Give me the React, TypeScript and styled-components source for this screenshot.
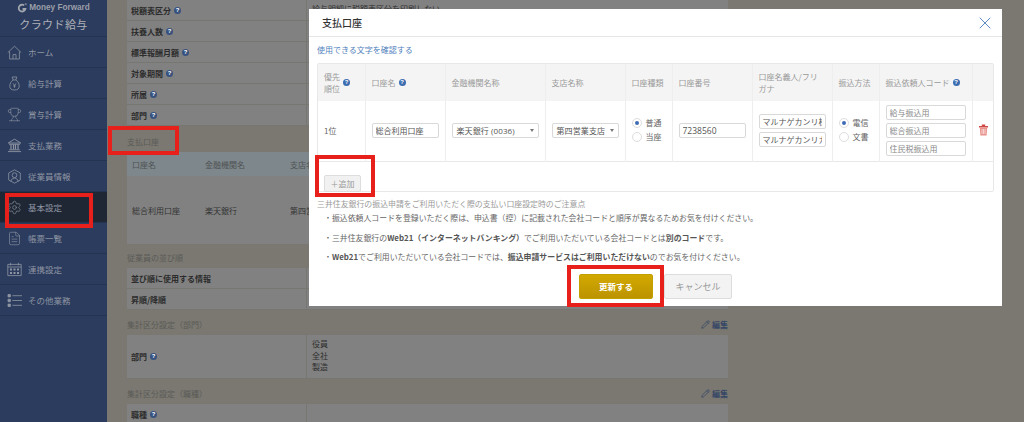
import * as React from "react";
import styled, { createGlobalStyle } from "styled-components";
import { FileText, Pencil, Settings, Trophy, X } from "lucide-react";

const GlobalStyle = createGlobalStyle`
  html, body {
    margin: 0;
    padding: 0;
    background: #7a7871;
  }
  * {
    box-sizing: border-box;
  }
  body {
    font-family: "Noto Sans CJK JP", "Liberation Sans", sans-serif;
  }
`;

const Page = styled.div`
  position: relative;
  display: flex;
  width: 1024px;
  height: 422px;
  overflow: hidden;
  background: #7a7871;
`;

const Sidebar = styled.nav`
  flex: 0 0 107px;
  background: #2b3c5e;
  color: #8f95a2;
`;

const Logo = styled.div`
  height: 37px;
  padding-top: 2px;
  text-align: center;
  border-bottom: 1px solid #24334f;
`;

const LogoTop = styled.div`
  display: flex;
  align-items: center;
  justify-content: center;
  gap: 2px;
  font-family: "Liberation Sans", sans-serif;
  font-size: 8.2px;
  font-weight: 700;
  line-height: 12px;
  color: #9a9fa9;
`;

const LogoName = styled.div`
  margin-top: 3px;
  font-size: 11px;
  line-height: 15px;
  letter-spacing: 0.4px;
  color: #aeb1b8;
`;

const NavItem = styled.div<{ $active?: boolean }>`
  display: flex;
  align-items: center;
  gap: 6px;
  height: 31px;
  padding-left: 7px;
  font-size: 8.5px;
  border-bottom: 1px solid #24334f;
  background: ${(p) => (p.$active ? "#1f2735" : "transparent")};
  svg {
    flex: 0 0 15px;
  }
`;

const Main = styled.main`
  flex: 0 0 621px;
  padding-left: 20px;
`;

const Panel = styled.div`
  background: #818181;
  border-radius: 1px;
`;

const SettingRow = styled.div<{ $height?: number }>`
  display: grid;
  grid-template-columns: 180px 1fr;
  height: ${(p) => p.$height ?? 21}px;
  border-bottom: 1px solid #777772;
`;

const SettingLabel = styled.div`
  display: flex;
  align-items: center;
  gap: 3px;
  padding-left: 4px;
  font-size: 8px;
  font-weight: 700;
  color: #2c2c2c;
  border-right: 1px solid #777772;
`;

const SettingValue = styled.div`
  padding: 3px 5px;
  font-size: 8px;
  line-height: 11.5px;
  color: #2f2f2f;
`;

const SectionTitle = styled.div<{ $top: number }>`
  display: flex;
  align-items: flex-end;
  justify-content: space-between;
  height: 11px;
  margin: ${(p) => p.$top}px 0 5px;
  font-size: 8px;
  line-height: 11px;
  color: #5a5a56;
`;

const EditLink = styled.span`
  display: flex;
  align-items: center;
  gap: 2px;
  font-weight: 700;
  color: #364766;
`;

const BankHead = styled.div`
  display: grid;
  grid-template-columns: 73px 85px 1fr;
  height: 24px;
  padding-left: 5px;
  align-items: center;
  background: #7e878b;
  font-size: 8px;
  color: #4f5355;
`;

const BankBody = styled(BankHead)`
  height: 68px;
  background: #818181;
  color: #333;
`;

const Overlay = styled.section`
  position: absolute;
  left: 309px;
  top: 9px;
  width: 693px;
  height: 297px;
  padding: 0 8px;
  background: #fff;
`;

const ModalHeader = styled.header`
  display: flex;
  align-items: center;
  justify-content: space-between;
  height: 28px;
  margin: 0 -8px;
  padding: 0 7px 0 13px;
  border-bottom: 1px solid #e6e6e6;
  font-size: 10px;
  font-weight: 500;
  color: #333;
  svg {
    color: #5d8cc6;
  }
`;

const CharLink = styled.div`
  height: 26px;
  padding-top: 7px;
  font-size: 8px;
  line-height: 11px;
  color: #4f81bd;
`;

const Accounts = styled.div`
  width: 677px;
  border: 1px solid #e8e8e8;
  border-radius: 2px;
`;

const AccountTable = styled.table`
  width: 100%;
  table-layout: fixed;
  border-collapse: collapse;
  font-size: 8px;
  th, td {
    padding: 0;
    border-right: 1px solid #eee;
  }
  th:last-child, td:last-child {
    border-right: 0;
  }
  tbody tr {
    border-bottom: 1px solid #e8e8e8;
  }
`;

const HeadCell = styled.th<{ $center?: boolean }>`
  height: 37px;
  padding: 0 6px !important;
  background: #f4f4f4;
  font-weight: 400;
  line-height: 12px;
  text-align: ${(p) => (p.$center ? "center" : "left")};
  color: #9a9a9a;
`;

const HeadInner = styled.span`
  display: inline-flex;
  align-items: center;
  gap: 3px;
`;

const BodyCell = styled.td<{ $pad?: number }>`
  height: 60px;
  padding: 0 ${(p) => p.$pad ?? 6}px !important;
  color: #666;
`;

const FieldStack = styled.div`
  display: flex;
  flex-direction: column;
  gap: 3px;
`;

const TextField = styled.input<{ $numeric?: boolean }>`
  display: block;
  width: 100%;
  height: 15px;
  padding: 0 3px;
  border: 1px solid #d9d9d9;
  border-radius: 2px;
  background: #fff;
  font: 400 ${(p) => (p.$numeric ? "8.5px" : "8px")} "Open Sans", "Noto Sans CJK JP", sans-serif;
  color: #555;
  &::placeholder {
    color: #8a8a8a;
    opacity: 1;
  }
`;

const SelectBox = styled.div`
  display: flex;
  align-items: center;
  justify-content: space-between;
  height: 15px;
  padding: 0 4px;
  border: 1px solid #d9d9d9;
  border-radius: 2px;
  font-family: "Open Sans", "Noto Sans CJK JP", sans-serif;
  font-size: 8px;
  letter-spacing: 0.1px;
  color: #555;
  white-space: nowrap;
  &::after {
    content: "";
    border: 2px solid transparent;
    border-top: 3px solid #777;
    border-bottom: 0;
  }
`;

const RadioLine = styled.label`
  display: flex;
  align-items: center;
  gap: 4px;
  height: 14px;
  font-size: 8px;
  color: #666;
`;

const RadioDot = styled.span<{ $on?: boolean }>`
  position: relative;
  width: 10px;
  height: 10px;
  border: 1px solid #ddd;
  border-radius: 50%;
  &::after {
    content: "";
    display: ${(p) => (p.$on ? "block" : "none")};
    position: absolute;
    inset: 2px;
    border-radius: 50%;
    background: #3f6cb5;
  }
`;

const RadioGroup = styled.div`
  margin-top: -2px;
`;

const AddRow = styled.div`
  height: 29px;
  padding: 6px 6px 0;
`;

const AddButton = styled.button`
  width: 37px;
  height: 17px;
  padding: 0;
  border: 1px solid #ddd;
  border-radius: 2px;
  background: #f1f1f1;
  font: 400 8px "Noto Sans CJK JP", sans-serif;
  color: #999;
`;

const Notice = styled.div`
  margin-top: 6px;
  font-size: 7.9px;
  color: #666;
`;

const NoticeTitle = styled.div`
  line-height: 11px;
  color: #9a9a9a;
`;

const NoticeLine = styled.p`
  margin: 7.5px 0 0;
  padding-left: 7px;
  line-height: 12px;
  white-space: nowrap;
  &:first-of-type {
    margin-top: 3.5px;
  }
  b {
    color: #555;
  }
`;

const ModalActions = styled.div`
  display: flex;
  justify-content: center;
  gap: 11px;
  margin-top: 10.5px;
`;

const PrimaryButton = styled.button`
  width: 74px;
  height: 25px;
  border: 1px solid #c2a000;
  border-radius: 2px;
  background: linear-gradient(#d2a900, #bc9300);
  font: 700 8.5px "Noto Sans CJK JP", sans-serif;
  color: #fff;
`;

const CancelButton = styled.button`
  width: 68px;
  height: 25px;
  border: 1px solid #ddd;
  border-radius: 2px;
  background: #f3f3f3;
  font: 400 9px "Noto Sans CJK JP", sans-serif;
  color: #999;
`;

const Callout = styled.div<{ $x: number; $y: number; $w: number; $h: number }>`
  position: absolute;
  left: ${(p) => p.$x}px;
  top: ${(p) => p.$y}px;
  width: ${(p) => p.$w}px;
  height: ${(p) => p.$h}px;
  border: 4px solid #e8201c;
`;

const HelpDot = styled.span<{ $dim?: boolean }>`
  display: inline-flex;
  align-items: center;
  justify-content: center;
  flex: 0 0 7px;
  width: 7px;
  height: 7px;
  border-radius: 50%;
  background: ${(p) => (p.$dim ? "#38527f" : "#3b6cb0")};
  font: 700 6px/7px "Liberation Sans", sans-serif;
  color: #fff;
`;

const Help = ({ dim }: { dim?: boolean }) => <HelpDot $dim={dim}>?</HelpDot>;

const HomeIcon = () => (
  <svg width="15" height="15" viewBox="0 0 15 15" fill="none" stroke="currentColor" strokeWidth="0.8">
    <path d="M0.8 7.6 7.5 1.2l6.7 6.4M2.6 6.4V14h9.8V6.4M6 14V9.6h3V14" />
  </svg>
);

const BagIcon = () => (
  <svg width="15" height="15" viewBox="0 0 15 15" fill="none" stroke="currentColor" strokeWidth="0.8">
    <path d="M5.2 1h4.6L8.8 4H6.2zM6.2 4C3.6 5.6 2.8 8 2.8 10.2c0 2.6 1.6 3.8 4.7 3.8s4.7-1.2 4.7-3.8C12.2 8 11.4 5.6 8.8 4" />
    <path d="M6 7.4l1.5 2 1.5-2M7.5 9.4v2.4M6.2 10h2.6" />
  </svg>
);

const BankIcon = () => (
  <svg width="15" height="15" viewBox="0 0 15 15" fill="none" stroke="currentColor" strokeWidth="0.9">
    <path d="M1.2 5 7.5 1.2 13.8 5zM2 6.3h11" />
    <path d="M4 6.5v5M6.5 6.5v5M8.5 6.5v5M11 6.5v5" strokeWidth="1.2" />
    <path d="M2.2 11.8h10.6M1 13.6h13" />
  </svg>
);

const StaffIcon = () => (
  <svg width="15" height="15" viewBox="0 0 15 15" fill="none" stroke="currentColor" strokeWidth="0.8">
    <path d="M7.5 0.8 13.3 4v7l-5.8 3.2L1.7 11V4z" />
    <circle cx="7.5" cy="6.2" r="2.4" />
    <path d="M3.8 12.4c.4-2.2 1.8-3.2 3.7-3.2s3.3 1 3.7 3.2" />
  </svg>
);

const CalendarIcon = () => (
  <svg width="15" height="15" viewBox="0 0 15 15" fill="none" stroke="currentColor" strokeWidth="0.8">
    <path d="M0.8 2.4h13.4v11.2H0.8zM3.6 0.8v2.6M11.4 0.8v2.6M0.8 5h13.4" />
    <path d="M3 6.6h2v2H3zM6.5 6.6h2v2h-2zM10 6.6h2v2h-2zM3 10h2v2H3zM6.5 10h2v2h-2zM10 10h2v2h-2z" fill="currentColor" stroke="none" />
  </svg>
);

const ListIcon = () => (
  <svg width="15" height="15" viewBox="0 0 15 15" fill="currentColor" stroke="currentColor" strokeWidth="0.8">
    <path d="M1 1.5h2.4v2.4H1zM1 6.3h2.4v2.4H1zM1 11.1h2.4v2.4H1z" />
    <path d="M5.4 2.7H15M5.4 7.5H15M5.4 12.3H15" fill="none" />
  </svg>
);

const TrashIcon = () => (
  <svg width="11" height="12" viewBox="0 0 11 12">
    <path d="M1 2h9v1.4H1zM3.8 0.6h3.4V2H3.8z" fill="#cf4a44" />
    <path d="M1.8 3.8h7.4L8.6 11.6H2.4z" fill="#e9928c" />
    <path d="M4 5v5M5.5 5v5M7 5v5" stroke="#fff" strokeWidth="0.6" />
  </svg>
);

const LogoMark = () => (
  <svg width="10" height="10" viewBox="0 0 10 10" fill="none" stroke="#a2a6ae" strokeWidth="1.8">
    <path d="M7.2 2.4A3.4 3.4 0 1 0 8.4 6H5.6" />
    <path d="M7.6 0.6 9.6 0.6 9.2 2.4z" fill="#a2a6ae" stroke="none" />
  </svg>
);

const navItems: { label: string; icon: React.ReactNode; active?: boolean }[] = [
  { label: "ホーム", icon: <HomeIcon /> },
  { label: "給与計算", icon: <BagIcon /> },
  { label: "賞与計算", icon: <Trophy size={15} strokeWidth={1} /> },
  { label: "支払業務", icon: <BankIcon /> },
  { label: "従業員情報", icon: <StaffIcon /> },
  { label: "基本設定", icon: <Settings size={15} strokeWidth={1} />, active: true },
  { label: "帳票一覧", icon: <FileText size={15} strokeWidth={1} /> },
  { label: "連携設定", icon: <CalendarIcon /> },
  { label: "その他業務", icon: <ListIcon /> },
];

const topRows = ["税額表区分", "扶養人数", "標準報酬月額", "対象期間", "所属", "部門"];

const callouts = [
  { x: 108, y: 126, w: 71, h: 29 },
  { x: 5, y: 193, w: 88, h: 35 },
  { x: 315, y: 155, w: 60, h: 42 },
  { x: 567, y: 265, w: 97, h: 42 },
];

function Background() {
  return (
    <Main>
      <Panel>
        {topRows.map((label) => (
          <SettingRow key={label}>
            <SettingLabel>
              {label}
              <Help dim />
            </SettingLabel>
            <SettingValue>{label === "税額表区分" ? "給与明細に税額表区分を印刷しない" : ""}</SettingValue>
          </SettingRow>
        ))}
      </Panel>
      <SectionTitle $top={10}>支払口座</SectionTitle>
      <BankHead>
        <span>口座名</span>
        <span>金融機関名</span>
        <span>支店名</span>
      </BankHead>
      <BankBody>
        <span>総合利用口座</span>
        <span>楽天銀行</span>
        <span>第四営</span>
      </BankBody>
      <SectionTitle $top={8}>従業員の並び順</SectionTitle>
      <Panel>
        <SettingRow>
          <SettingLabel>並び順に使用する情報</SettingLabel>
          <SettingValue />
        </SettingRow>
        <SettingRow>
          <SettingLabel>昇順/降順</SettingLabel>
          <SettingValue />
        </SettingRow>
      </Panel>
      <SectionTitle $top={9}>
        集計区分設定（部門）
        <EditLink>
          <Pencil size={9} strokeWidth={2} />
          編集
        </EditLink>
      </SectionTitle>
      <Panel>
        <SettingRow $height={44}>
          <SettingLabel>
            部門
            <Help dim />
          </SettingLabel>
          <SettingValue>
            役員
            <br />
            全社
            <br />
            製造
          </SettingValue>
        </SettingRow>
      </Panel>
      <SectionTitle $top={9}>
        集計区分設定（職種）
        <EditLink>
          <Pencil size={9} strokeWidth={2} />
          編集
        </EditLink>
      </SectionTitle>
      <Panel>
        <SettingRow>
          <SettingLabel>
            職種
            <Help dim />
          </SettingLabel>
          <SettingValue />
        </SettingRow>
      </Panel>
    </Main>
  );
}

function AccountModal() {
  return (
    <Overlay>
      <ModalHeader>
        支払口座
        <X size={20} strokeWidth={1.2} />
      </ModalHeader>
      <CharLink>使用できる文字を確認する</CharLink>
      <Accounts>
        <AccountTable>
          <colgroup>
            <col style={{ width: 47 }} />
            <col style={{ width: 80 }} />
            <col style={{ width: 100 }} />
            <col style={{ width: 80 }} />
            <col style={{ width: 47 }} />
            <col style={{ width: 80 }} />
            <col style={{ width: 80 }} />
            <col style={{ width: 47 }} />
            <col style={{ width: 93 }} />
            <col />
          </colgroup>
          <thead>
            <tr>
              <HeadCell>
                <HeadInner>
                  <span>
                    優先
                    <br />
                    順位
                  </span>
                  <Help />
                </HeadInner>
              </HeadCell>
              <HeadCell>
                <HeadInner>
                  口座名
                  <Help />
                </HeadInner>
              </HeadCell>
              <HeadCell>金融機関名称</HeadCell>
              <HeadCell>支店名称</HeadCell>
              <HeadCell>口座種類</HeadCell>
              <HeadCell>口座番号</HeadCell>
              <HeadCell>口座名義人/フリガナ</HeadCell>
              <HeadCell>振込方法</HeadCell>
              <HeadCell>
                <HeadInner>
                  振込依頼人コード
                  <Help />
                </HeadInner>
              </HeadCell>
              <HeadCell />
            </tr>
          </thead>
          <tbody>
            <tr>
              <BodyCell>1位</BodyCell>
              <BodyCell>
                <TextField readOnly value="総合利用口座" />
              </BodyCell>
              <BodyCell>
                <SelectBox>楽天銀行 (0036)</SelectBox>
              </BodyCell>
              <BodyCell>
                <SelectBox>第四営業支店</SelectBox>
              </BodyCell>
              <BodyCell>
                <RadioGroup>
                  <RadioLine>
                    <RadioDot $on />
                    普通
                  </RadioLine>
                  <RadioLine>
                    <RadioDot />
                    当座
                  </RadioLine>
                </RadioGroup>
              </BodyCell>
              <BodyCell>
                <TextField readOnly $numeric value="7238560" />
              </BodyCell>
              <BodyCell>
                <FieldStack>
                  <TextField readOnly value="マルナゲカンリ株式会社" />
                  <TextField readOnly value="マルナゲカンリカブシキガイシャ" />
                </FieldStack>
              </BodyCell>
              <BodyCell>
                <RadioGroup>
                  <RadioLine>
                    <RadioDot $on />
                    電信
                  </RadioLine>
                  <RadioLine>
                    <RadioDot />
                    文書
                  </RadioLine>
                </RadioGroup>
              </BodyCell>
              <BodyCell>
                <FieldStack>
                  <TextField readOnly placeholder="給与振込用" />
                  <TextField readOnly placeholder="総合振込用" />
                  <TextField readOnly placeholder="住民税振込用" />
                </FieldStack>
              </BodyCell>
              <BodyCell $pad={5}>
                <TrashIcon />
              </BodyCell>
            </tr>
          </tbody>
        </AccountTable>
        <AddRow>
          <AddButton>＋追加</AddButton>
        </AddRow>
      </Accounts>
      <Notice>
        <NoticeTitle>三井住友銀行の振込申請をご利用いただく際の支払い口座設定時のご注意点</NoticeTitle>
        <NoticeLine>・振込依頼人コードを登録いただく際は、申込書（控）に記載された会社コードと順序が異なるためお気を付けください。</NoticeLine>
        <NoticeLine>
          ・三井住友銀行の<b>Web21（インターネットバンキング）</b>でご利用いただいている会社コードとは<b>別のコード</b>です。
        </NoticeLine>
        <NoticeLine>
          ・<b>Web21</b>でご利用いただいている会社コードでは、<b>振込申請サービスはご利用いただけない</b>のでお気を付けください。
        </NoticeLine>
      </Notice>
      <ModalActions>
        <PrimaryButton>更新する</PrimaryButton>
        <CancelButton>キャンセル</CancelButton>
      </ModalActions>
    </Overlay>
  );
}

export default function App() {
  return (
    <Page>
      <GlobalStyle />
      <Sidebar>
        <Logo>
          <LogoTop>
            <LogoMark />
            Money Forward
          </LogoTop>
          <LogoName>クラウド給与</LogoName>
        </Logo>
        {navItems.map((item) => (
          <NavItem key={item.label} $active={item.active}>
            {item.icon}
            {item.label}
          </NavItem>
        ))}
      </Sidebar>
      <Background />
      <AccountModal />
      {callouts.map((c) => (
        <Callout key={c.x} $x={c.x} $y={c.y} $w={c.w} $h={c.h} />
      ))}
    </Page>
  );
}
